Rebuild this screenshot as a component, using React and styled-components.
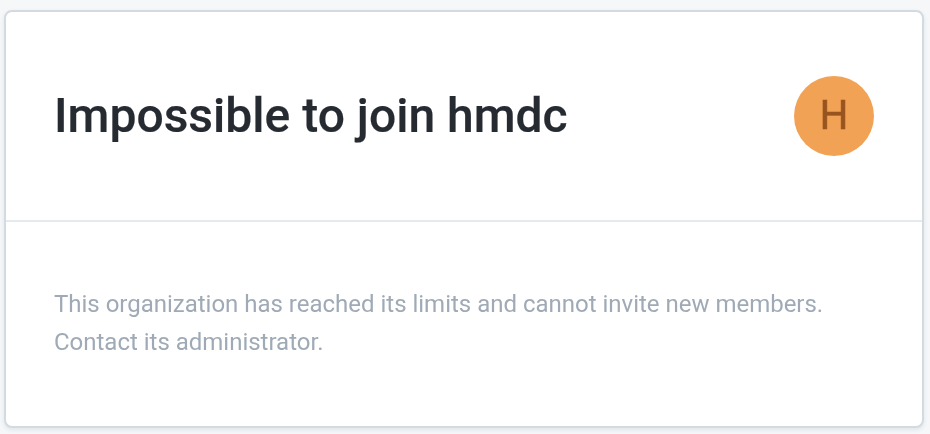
import React from "react";
import styled, { createGlobalStyle } from "styled-components";

const GlobalStyle = createGlobalStyle`
  * { box-sizing: border-box; }
  body {
    margin: 0;
    background: #f5f7f9;
    font-family: Roboto, sans-serif;
    -webkit-font-smoothing: antialiased;
  }
`;

const Page = styled.main`
  height: 434px;
  padding: 10px 6px 6px 4px;
  overflow: hidden;
`;

const Card = styled.section`
  height: 418px;
  display: flex;
  flex-direction: column;
  background: #fff;
  border: 2px solid #d3dae0;
  border-radius: 8px;
  box-shadow: 0 2px 4px rgba(60, 80, 100, 0.1);
`;

const Header = styled.header`
  height: 210px;
  flex: none;
  display: flex;
  align-items: center;
  justify-content: space-between;
  padding: 0 48px;
  border-bottom: 2px solid #e5eaed;
`;

const Title = styled.h1`
  margin: 0;
  color: #262a31;
  font-size: 48px;
  line-height: 56px;
  font-weight: 500;
  letter-spacing: 0.01px;
  white-space: nowrap;
  -webkit-text-stroke: 0.2px #262a31;
  will-change: transform;
`;

const Avatar = styled.div`
  width: 80px;
  height: 80px;
  border-radius: 50%;
  display: flex;
  align-items: center;
  justify-content: center;
  background: #f2a254;
  color: #97541f;
  font-size: 40px;
  line-height: 40px;
  -webkit-text-stroke: 0.7px #97541f;
  will-change: transform;
`;

const Message = styled.p`
  margin: 0;
  padding: 63px 48px 0;
  color: #9faab6;
  font-size: 24px;
  line-height: 38px;
  letter-spacing: -0.01px;
  will-change: transform;
`;

export default function App() {
  return (
    <>
      <GlobalStyle />
      <Page>
        <Card>
          <Header>
            <Title>Impossible to join hmdc</Title>
            <Avatar>H</Avatar>
          </Header>
          <Message>
            This organization has reached its limits and cannot invite new members.
            <br />
            Contact its administrator.
          </Message>
        </Card>
      </Page>
    </>
  );
}
